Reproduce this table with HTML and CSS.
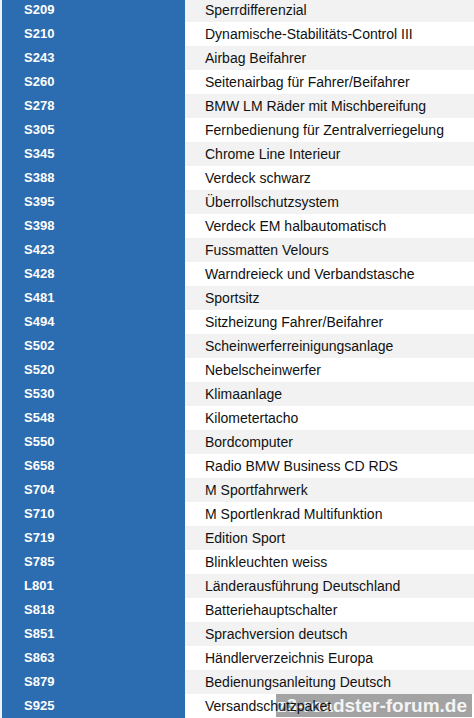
FILE: index.html
```html
<!DOCTYPE html>
<html lang="de">
<head>
<meta charset="utf-8">
<link rel="stylesheet" href="styles.css">
<title>Ausstattung</title>
</head>
<body>
<div class="table">
  <div class="row"><div class="code">S209</div><div class="desc"><span>Sperrdifferenzial</span></div></div>
  <div class="row"><div class="code">S210</div><div class="desc"><span>Dynamische-Stabilitäts-Control III</span></div></div>
  <div class="row"><div class="code">S243</div><div class="desc"><span>Airbag Beifahrer</span></div></div>
  <div class="row"><div class="code">S260</div><div class="desc"><span>Seitenairbag für Fahrer/Beifahrer</span></div></div>
  <div class="row"><div class="code">S278</div><div class="desc"><span>BMW LM Räder mit Mischbereifung</span></div></div>
  <div class="row"><div class="code">S305</div><div class="desc"><span>Fernbedienung für Zentralverriegelung</span></div></div>
  <div class="row"><div class="code">S345</div><div class="desc"><span>Chrome Line Interieur</span></div></div>
  <div class="row"><div class="code">S388</div><div class="desc"><span>Verdeck schwarz</span></div></div>
  <div class="row"><div class="code">S395</div><div class="desc"><span>Überrollschutzsystem</span></div></div>
  <div class="row"><div class="code">S398</div><div class="desc"><span>Verdeck EM halbautomatisch</span></div></div>
  <div class="row"><div class="code">S423</div><div class="desc"><span>Fussmatten Velours</span></div></div>
  <div class="row"><div class="code">S428</div><div class="desc"><span>Warndreieck und Verbandstasche</span></div></div>
  <div class="row"><div class="code">S481</div><div class="desc"><span>Sportsitz</span></div></div>
  <div class="row"><div class="code">S494</div><div class="desc"><span>Sitzheizung Fahrer/Beifahrer</span></div></div>
  <div class="row"><div class="code">S502</div><div class="desc"><span>Scheinwerferreinigungsanlage</span></div></div>
  <div class="row"><div class="code">S520</div><div class="desc"><span>Nebelscheinwerfer</span></div></div>
  <div class="row"><div class="code">S530</div><div class="desc"><span>Klimaanlage</span></div></div>
  <div class="row"><div class="code">S548</div><div class="desc"><span>Kilometertacho</span></div></div>
  <div class="row"><div class="code">S550</div><div class="desc"><span>Bordcomputer</span></div></div>
  <div class="row"><div class="code">S658</div><div class="desc"><span>Radio BMW Business CD RDS</span></div></div>
  <div class="row"><div class="code">S704</div><div class="desc"><span>M Sportfahrwerk</span></div></div>
  <div class="row"><div class="code">S710</div><div class="desc"><span>M Sportlenkrad Multifunktion</span></div></div>
  <div class="row"><div class="code">S719</div><div class="desc"><span>Edition Sport</span></div></div>
  <div class="row"><div class="code">S785</div><div class="desc"><span>Blinkleuchten weiss</span></div></div>
  <div class="row"><div class="code">L801</div><div class="desc"><span>Länderausführung Deutschland</span></div></div>
  <div class="row"><div class="code">S818</div><div class="desc"><span>Batteriehauptschalter</span></div></div>
  <div class="row"><div class="code">S851</div><div class="desc"><span>Sprachversion deutsch</span></div></div>
  <div class="row"><div class="code">S863</div><div class="desc"><span>Händlerverzeichnis Europa</span></div></div>
  <div class="row"><div class="code">S879</div><div class="desc"><span>Bedienungsanleitung Deutsch</span></div></div>
  <div class="row"><div class="code">S925</div><div class="desc"><span>Versandschutzpaket</span><div class="watermark">z3-roadster-forum.de</div></div></div>
</div>
</body>
</html>
```
FILE: styles.css
```css
html, body {
  margin: 0;
  padding: 0;
  background: #ffffff;
  overflow: hidden;
}
body {
  font-family: "Liberation Sans", Arial, sans-serif;
  width: 474px;
  height: 718px;
}
.table {
  display: flex;
  flex-direction: column;
  margin-top: -2px;
  padding-left: 2px;
  background: #eef2f7;
}
.row {
  display: grid;
  grid-template-columns: 183px 1fr;
  height: 24px;
}
.code {
  background: #2b6db0;
  color: #ffffff;
  font-weight: bold;
  font-size: 13px;
  line-height: 24px;
  padding-left: 22px;
}
.desc {
  position: relative;
  background: #f2f2f2;
  color: #111111;
  font-size: 14px;
  line-height: 24px;
  padding-left: 20px;
  border-bottom: 1px solid #ececec;
  box-sizing: border-box;
}
.row:nth-child(even) .desc {
  background: #ffffff;
}
.desc span {
  position: relative;
  z-index: 2;
}
.watermark {
  position: absolute;
  z-index: 1;
  left: 91px;
  top: 0;
  width: 196px;
  height: 23px;
  background: rgba(140, 140, 140, 0.8);
  color: #f4f4f4;
  font-size: 19px;
  font-weight: bold;
  line-height: 23px;
  text-align: right;
  padding-right: 5px;
  box-sizing: border-box;
  white-space: nowrap;
}
```
